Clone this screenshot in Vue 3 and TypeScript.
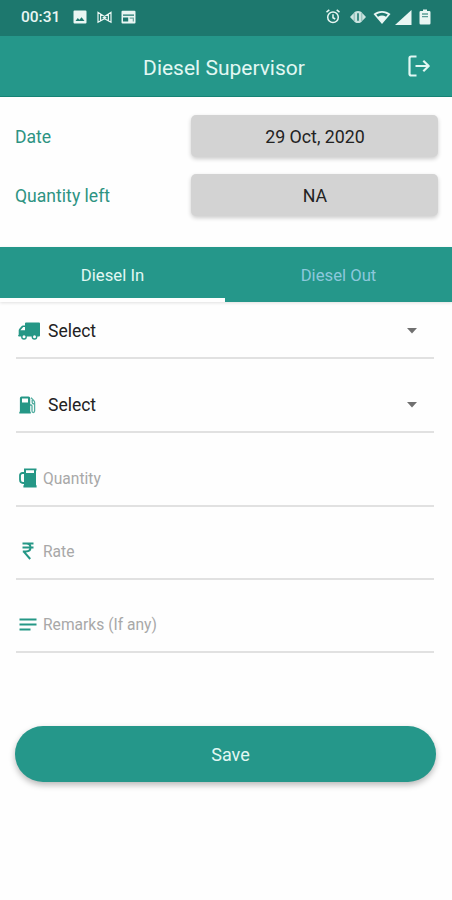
<script setup lang="ts">
import { ref } from 'vue'

type Tab = 'in' | 'out'
type Icon = 'truck' | 'pump' | 'jug' | 'rupee' | 'notes'

interface Field {
  id: string
  label: string
  icon: Icon
  select: boolean
}

const activeTab = ref<Tab>('in')
const info = [
  { label: 'Date', value: '29 Oct, 2020' },
  { label: 'Quantity left', value: 'NA' },
]
const tabs: { id: Tab; label: string }[] = [
  { id: 'in', label: 'Diesel In' },
  { id: 'out', label: 'Diesel Out' },
]
const fields: Field[] = [
  { id: 'vehicle', label: 'Select', icon: 'truck', select: true },
  { id: 'station', label: 'Select', icon: 'pump', select: true },
  { id: 'quantity', label: 'Quantity', icon: 'jug', select: false },
  { id: 'rate', label: 'Rate', icon: 'rupee', select: false },
  { id: 'remarks', label: 'Remarks (If any)', icon: 'notes', select: false },
]
</script>

<template>
  <main class="screen">
    <div class="status">
      <span class="clock">00:31</span>
      <svg class="s-photo" viewBox="0 0 14 14" width="14" height="14">
        <path fill="currentColor" fill-rule="evenodd" d="M1.5 .5h11a1 1 0 0 1 1 1v11a1 1 0 0 1-1 1h-11a1 1 0 0 1-1-1v-11a1 1 0 0 1 1-1zM2.5 11h9L8.6 7.2 6.4 9.8 4.8 8z" />
      </svg>
      <svg class="s-mail" viewBox="0 0 15 13" width="15" height="13" fill="none" stroke="currentColor" stroke-width="1.2">
        <path d="M1 11.2V1.4L7.5 5.4 14 1.4v9.8L7.5 7.8zM3.6 3.6v5.8M11.4 3.6v5.8M5.6 6.6h3.8" />
      </svg>
      <svg class="s-card" viewBox="0 0 15 14" width="15" height="14">
        <path fill="currentColor" fill-rule="evenodd" d="M1.5 .8h12a1 1 0 0 1 1 1v10.6a1 1 0 0 1-1 1h-12a1 1 0 0 1-1-1V1.8a1 1 0 0 1 1-1zM2 4.4v1.4h11V4.4zM2 7.4v4.2h5.2V7.4z" />
        <path fill="#1d786e" fill-opacity=".6" d="M8.7 7.4H13v4.2h-1.3V8.7h-3z" />
      </svg>
      <span class="spacer"></span>
      <svg class="s-alarm" viewBox="0 0 16 16" width="16" height="16" fill="none" stroke="currentColor" stroke-width="1.5">
        <circle cx="8" cy="8.3" r="5.3" />
        <path d="M8 5.3v3.4l2.2 1.3M1.5 3.2 4.3 .9M14.5 3.2l-2.8-2.3" />
      </svg>
      <svg class="s-vibrate" viewBox="0 0 16 14" width="16" height="14">
        <path fill="currentColor" fill-opacity=".85" fill-rule="evenodd" d="M0 7 5 1.8Q8 0 11 1.8L16 7l-5 5.2Q8 14 5 12.2zM7.2 3.2v7.6h1.6V3.2z" />
        <path stroke="#1d786e" stroke-opacity=".5" stroke-width=".8" d="M4.2 3v8M11.8 3v8" />
      </svg>
      <svg class="s-wifi" viewBox="0 0 18 14" width="18" height="14">
        <path fill="currentColor" fill-rule="evenodd" d="M.5 4.1C5.4-.2 12.6-.2 17.5 4.1L9 14zM3.2 4.6 5 6.7Q9 4.2 13 6.7l1.8-2.1Q9 .8 3.2 4.6z" />
      </svg>
      <svg class="s-signal" viewBox="0 0 17 15" width="17" height="15">
        <path fill="currentColor" d="M16.5 0v15H0z" />
      </svg>
      <svg class="s-battery" viewBox="0 0 12 16" width="12" height="16">
        <path fill="currentColor" fill-rule="evenodd" d="M4 .5h4V2h2.3q1.2 0 1.2 1.2v11q0 1.3-1.2 1.3H1.7Q.5 15.5.5 14.2v-11Q.5 2 1.7 2H4z" />
        <path stroke="#1d786e" stroke-opacity=".7" stroke-width="1.3" d="M3 5h6M3 7.6h6" />
      </svg>
    </div>

    <header class="appbar">
      <h1>Diesel Supervisor</h1>
      <button class="logout" aria-label="Log out">
        <svg viewBox="0 0 22 22" width="22" height="22" fill="none" stroke="currentColor" stroke-width="2.2" stroke-linejoin="round">
          <path d="M8.5 1.5H3.2Q1.5 1.5 1.5 3.2v15.6q0 1.7 1.7 1.7h5.3M7.500 11h13M15.300 5.800l5.400 5.200-5.400 5.200" />
        </svg>
      </button>
    </header>

    <section class="info">
      <div v-for="row in info" :key="row.label" class="info-row">
        <span class="info-label">{{ row.label }}</span>
        <span class="info-value">{{ row.value }}</span>
      </div>
    </section>

    <nav class="tabs">
      <button
        v-for="tab in tabs"
        :key="tab.id"
        class="tab"
        :class="{ active: tab.id === activeTab }"
        @click="activeTab = tab.id"
      >{{ tab.label }}</button>
    </nav>

    <form class="form" @submit.prevent>
      <div v-for="f in fields" :key="f.id" class="field" :class="{ select: f.select }">
        <span class="icon">
          <svg v-if="f.icon === 'truck'" viewBox="0 0 22 18" width="22" height="18">
            <path fill="currentColor" fill-rule="evenodd" d="M8 .5h13q1 0 1 1v12q0 1-1 1H1.200Q0 14.500 0 13.400q.7-.4.700-1V8.200q0-.7.500-1.300l2.300-2.700Q4 3.500 5 3.500h2v-2q0-1 1-1zM5.200 5 2.400 8.200H7V5z" />
            <circle cx="6" cy="14.800" r="2.900" fill="currentColor" />
            <circle cx="16.500" cy="14.800" r="2.900" fill="currentColor" />
            <circle cx="6" cy="14.800" r="1.500" fill="#fefefe" />
            <circle cx="16.500" cy="14.800" r="1.500" fill="#fefefe" />
          </svg>
          <svg v-else-if="f.icon === 'pump'" viewBox="0 0 18 18" width="18" height="18">
            <path fill="currentColor" fill-rule="evenodd" d="M2.500.5h7q1.700 0 1.700 1.700v13.600h.6v1.700H.3v-1.700h.6V2.200Q.9.500 2.500.5zM3 2.500v4h6v-4z" />
            <path fill="none" stroke="currentColor" stroke-opacity=".8" stroke-width="1.3" d="M11 9h1q1 0 1 1v5q0 1.500 1.300 1.500t1.300-1.500V6.500q0-1-.8-1.900L12 1.800M13.200 4v2.500q0 1.300 2 1.500" />
          </svg>
          <svg v-else-if="f.icon === 'jug'" viewBox="0 0 18 20" width="18" height="20">
            <path fill="currentColor" fill-rule="evenodd" d="M5 .5h12.500v2H17v14.800h.6v2.200H4.400v-2.200H5zM7 2.300v2.600h8V2.300z" />
            <path fill="none" stroke="currentColor" stroke-width="1.8" d="M5.500 5H3.200Q1 5.500 1 7.500v4Q1 15 4 15h1.500" />
          </svg>
          <svg v-else-if="f.icon === 'rupee'" viewBox="0 0 12 18" width="12" height="18" fill="none" stroke="currentColor" stroke-width="2">
            <path d="M.5 1.500h11M.5 5.500h11M.8 9.500H4q4.500-.2 4.500-4T4.500 1.500M2 9.800l6.200 7.200" />
          </svg>
          <svg v-else viewBox="0 0 18 13" width="18" height="13" fill="none" stroke="currentColor" stroke-width="1.9">
            <path d="M.5 1.500h17M.5 6.500h17M.5 11.500h11" />
          </svg>
        </span>
        <span class="text">{{ f.label }}</span>
        <svg v-if="f.select" class="caret" viewBox="0 0 10 6" width="10" height="6">
          <path fill="currentColor" d="M0 0h10L5 5.500z" />
        </svg>
      </div>
      <button class="save" type="submit">Save</button>
    </form>
  </main>
</template>

<style>
body {
  background: #fefefe;
}
</style>

<style scoped>
.screen {
  width: 452px;
  height: 900px;
  overflow: hidden;
  background: #fefefe;
  font-family: Roboto, 'Liberation Sans', sans-serif;
  color: #222;
}
svg {
  display: block;
  flex: none;
}
button {
  border: 0;
  padding: 0;
  background: none;
  font: inherit;
  color: inherit;
}
.status {
  box-sizing: border-box;
  height: 35.5px;
  padding: 0 21px 1px;
  display: flex;
  align-items: center;
  background: #1d786e;
  color: #e9f6f3;
}
.clock {
  width: 52px;
  font-size: 15.5px;
  font-weight: 500;
}
.s-mail {
  margin-left: 10px;
}
.s-card {
  margin-left: 9px;
}
.spacer {
  flex: 1;
}
.s-vibrate {
  margin-left: 9px;
}
.s-wifi {
  margin-left: 7px;
}
.s-signal {
  margin-left: 4px;
}
.s-battery {
  margin-left: 7px;
}
.appbar {
  box-sizing: border-box;
  height: 61.5px;
  padding: 0 22px 0 45px;
  display: flex;
  align-items: center;
  background: #25978a;
  border-bottom: 1px solid #168375;
  color: #e2f7f3;
}
h1 {
  flex: 1;
  margin: 4px 0 0;
  padding-right: 5px;
  text-align: center;
  font-size: 21px;
  font-weight: 400;
}
.info {
  box-sizing: border-box;
  height: 150px;
  padding: 18px 14px 0 15px;
  display: flex;
  flex-direction: column;
  gap: 17px;
}
.info-row {
  display: flex;
  align-items: center;
  height: 42px;
}
.info-label {
  width: 176px;
  padding-top: 1px;
  font-size: 17.6px;
  color: #2d9382;
}
.info-value {
  flex: 1;
  height: 42px;
  line-height: 44px;
  padding-left: 1px;
  border-radius: 5px;
  background: #d3d3d3;
  box-shadow: 0 2px 4px rgba(0, 0, 0, 0.2);
  text-align: center;
  font-size: 17.8px;
}
.tabs {
  height: 55px;
  display: flex;
  background: #25978a;
  box-shadow: 0 1px 3px rgba(0, 0, 0, 0.12);
}
.tab {
  box-sizing: border-box;
  width: 227px;
  padding-top: 6px;
  font-size: 16.7px;
  color: #8cc8dc;
  border-bottom: 4px solid transparent;
}
.tab.active {
  width: 225px;
  color: #e2f7f3;
  border-bottom-color: #fefefe;
}
.form {
  padding: 0 18px 0 16px;
}
.field {
  box-sizing: border-box;
  height: 73px;
  padding: 18px 17px 0 2px;
  display: flex;
  align-items: center;
  border-bottom: 2px solid #e1e1e1;
}
.field:first-child {
  height: 57px;
  padding-top: 2px;
}
.field:nth-child(2) {
  height: 74px;
  padding-top: 19px;
}
.field:nth-child(3) {
  height: 74px;
}
.field:nth-child(4) {
  height: 72.5px;
}
.icon {
  width: 25px;
  display: flex;
  color: #259786;
}
.icon svg {
  margin-left: 1px;
}
.field:first-child .icon svg {
  margin-left: 0;
}
.field:nth-child(4) .icon svg {
  margin-left: 4px;
}
.text {
  flex: 1;
  padding-top: 2px;
  font-size: 15.6px;
  color: #a8a8a8;
}
.select .text {
  padding: 1px 0 0 5px;
  font-size: 17.5px;
  color: #222;
}
.caret {
  color: #707070;
}
.save {
  box-sizing: border-box;
  display: block;
  width: 421px;
  height: 56px;
  margin: 73px 0 0 -1px;
  padding: 1px 0 0 10px;
  border-radius: 28px;
  background: #25978a;
  box-shadow: 0 3px 6px rgba(0, 0, 0, 0.28);
  color: #e2f7f3;
  font-size: 18px;
}
</style>
